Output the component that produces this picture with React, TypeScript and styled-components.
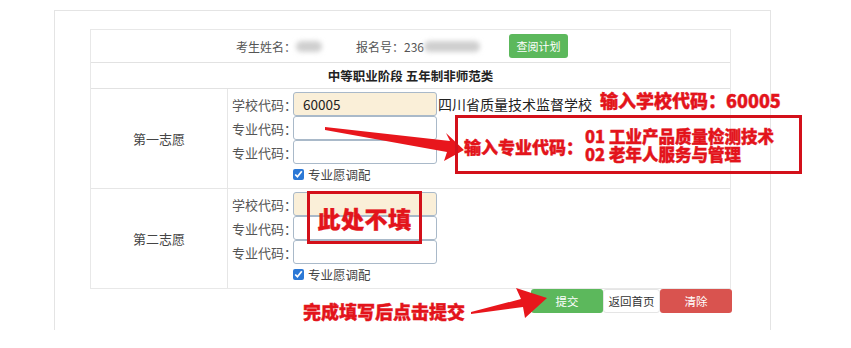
import styled, { createGlobalStyle } from "styled-components";

const GlobalStyle = createGlobalStyle`
  body {
    margin: 0;
    background: #ffffff;
    font-family: "Noto Sans CJK SC", "Noto Sans", sans-serif;
    color: #333;
  }
`;

const fields = ["学校代码：", "专业代码：", "专业代码："];

interface ChoiceProps {
  title: string;
  schoolCode?: string;
  schoolName?: string;
}

function Choice({ title, schoolCode, schoolName }: ChoiceProps) {
  return (
    <ChoiceRow>
      <ChoiceLabel>{title}</ChoiceLabel>
      <FieldCell>
        {fields.map((f, i) => (
          <FieldLine key={i}>
            <FieldLabel>{f}</FieldLabel>
            <CodeInput $school={i === 0}>{i === 0 ? schoolCode : ""}</CodeInput>
            {i === 0 && schoolName && <SchoolName>{schoolName}</SchoolName>}
          </FieldLine>
        ))}
        <CheckLine>
          <Check type="checkbox" checked readOnly />
          <span>专业愿调配</span>
        </CheckLine>
      </FieldCell>
    </ChoiceRow>
  );
}

export default function App() {
  return (
    <Page>
      <GlobalStyle />
      <Card>
        <Table>
          <InfoRow>
            <InfoText>考生姓名：</InfoText>
            <Blur $w={26} />
            <InfoText style={{ marginLeft: 34 }}>报名号：236</InfoText>
            <Blur $w={56} />
            <SmallButton $color="#5cb85c">查阅计划</SmallButton>
          </InfoRow>
          <TitleRow>中等职业阶段 五年制非师范类</TitleRow>
          <Choice title="第一志愿" schoolCode="60005" schoolName="四川省质量技术监督学校" />
          <Choice title="第二志愿" />
        </Table>
        <ButtonBar>
          <ActionButton $bg="#5cb85c" $fg="#fff">提交</ActionButton>
          <ActionButton $bg="#fff" $fg="#333" $w={57}>返回首页</ActionButton>
          <ActionButton $bg="#d9534f" $fg="#fff">清除</ActionButton>
        </ButtonBar>
      </Card>

      <Arrows viewBox="0 0 851 348" width={851} height={348}>
        <polygon points="325,127 450,141 446,133 464,150 444,161 447,152 325,130" fill="#e8161c" />
        <polygon points="471,312 521,299 516,288 547,298 525,318 523,307 471,314" fill="#e8161c" />
      </Arrows>

      <Note $x={600} $y={89} $size={18}>输入学校代码：60005</Note>
      <NoteBox $x={455} $y={115} $w={347} $h={59}>
        <NoteLead>输入专业代码：</NoteLead>
        <NoteList>
          <span>01 工业产品质量检测技术</span>
          <span>02 老年人服务与管理</span>
        </NoteList>
      </NoteBox>
      <NoteBox $x={307} $y={191} $w={115} $h={53} $center>
        <BigNote>此处不填</BigNote>
      </NoteBox>
      <Note $x={303} $y={300} $size={18}>完成填写后点击提交</Note>
    </Page>
  );
}

const Page = styled.div`
  position: relative;
  width: 851px;
  height: 348px;
  overflow: hidden;
  padding: 10px 0 0 54px;
  box-sizing: border-box;
`;

const Card = styled.div`
  width: 717px;
  height: 320px;
  box-sizing: border-box;
  border: 1px solid #e4e4e4;
  border-bottom: none;
  padding: 18px 0 0 35px;
`;

const Table = styled.div`
  width: 641px;
  box-sizing: border-box;
  border: 1px solid #e8e8e8;
  display: flex;
  flex-direction: column;
`;

const InfoRow = styled.div`
  height: 32px;
  border-bottom: 1px solid #e2e2e2;
  display: flex;
  align-items: center;
  padding-left: 145px;
  font-size: 12px;
  color: #555;
`;

const InfoText = styled.span`
  white-space: nowrap;
`;

const Blur = styled.span<{ $w: number }>`
  display: inline-block;
  width: ${(p) => p.$w}px;
  height: 11px;
  background: #cfcfcf;
  border-radius: 6px;
  filter: blur(2.5px);
`;

const SmallButton = styled.span<{ $color: string }>`
  margin-left: 29px;
  width: 59px;
  height: 24px;
  border-radius: 3px;
  background: ${(p) => p.$color};
  color: #fff;
  font-size: 11px;
  display: flex;
  align-items: center;
  justify-content: center;
`;

const TitleRow = styled.div`
  height: 25px;
  border-bottom: 1px solid #e2e2e2;
  display: flex;
  align-items: center;
  justify-content: center;
  font-size: 12.5px;
  font-weight: 700;
  color: #222;
`;

const ChoiceRow = styled.div`
  display: grid;
  grid-template-columns: 137px 1fr;
  height: 99px;
  border-bottom: 1px solid #e6e6e6;
  &:last-child {
    border-bottom: none;
  }
`;

const ChoiceLabel = styled.div`
  border-right: 1px solid #e6e6e6;
  display: flex;
  align-items: center;
  justify-content: center;
  font-size: 13px;
  color: #444;
`;

const FieldCell = styled.div`
  padding: 3px 0 0 4px;
  display: flex;
  flex-direction: column;
`;

const FieldLine = styled.div`
  display: flex;
  align-items: center;
  height: 24px;
`;

const FieldLabel = styled.span`
  width: 61px;
  font-size: 13px;
  color: #555;
  white-space: nowrap;
`;

const CodeInput = styled.div<{ $school: boolean }>`
  width: 144px;
  height: 24px;
  box-sizing: border-box;
  border: 1px solid #a9b9c9;
  border-radius: 3px;
  background: ${(p) => (p.$school ? "#faefd8" : "#fff")};
  padding-left: 9px;
  font-size: 13.5px;
  color: #222;
  display: flex;
  align-items: center;
`;

const SchoolName = styled.span`
  margin-left: 1px;
  font-size: 14px;
  color: #222;
  white-space: nowrap;
`;

const CheckLine = styled.label`
  display: flex;
  align-items: center;
  gap: 4px;
  height: 20px;
  padding-left: 61px;
  font-size: 12.5px;
  color: #444;
`;

const Check = styled.input`
  margin: 0;
  width: 11px;
  height: 11px;
  accent-color: #2b78d6;
`;

const ButtonBar = styled.div`
  width: 642px;
  display: flex;
  justify-content: flex-end;
`;

const ActionButton = styled.span<{ $bg: string; $fg: string; $w?: number }>`
  width: ${(p) => p.$w ?? 72}px;
  height: 24px;
  border-radius: 3px;
  background: ${(p) => p.$bg};
  color: ${(p) => p.$fg};
  border: ${(p) => (p.$bg === "#fff" ? "1px solid #e5e5e5" : "none")};
  box-sizing: border-box;
  font-size: 11.5px;
  display: flex;
  align-items: center;
  justify-content: center;
`;

const Arrows = styled.svg`
  position: absolute;
  left: 0;
  top: 0;
  pointer-events: none;
`;

const Note = styled.div<{ $x: number; $y: number; $size: number }>`
  position: absolute;
  left: ${(p) => p.$x}px;
  top: ${(p) => p.$y}px;
  font-size: ${(p) => p.$size}px;
  line-height: 22px;
  font-weight: 900;
  -webkit-text-stroke: 0.4px #e3141b;
  color: #e3141b;
  white-space: nowrap;
`;

const NoteBox = styled.div<{ $x: number; $y: number; $w: number; $h: number; $center?: boolean }>`
  position: absolute;
  left: ${(p) => p.$x}px;
  top: ${(p) => p.$y}px;
  width: ${(p) => p.$w}px;
  height: ${(p) => p.$h}px;
  box-sizing: border-box;
  border: 3px solid #d3101a;
  display: flex;
  align-items: center;
  justify-content: ${(p) => (p.$center ? "center" : "flex-start")};
  padding-left: ${(p) => (p.$center ? 0 : 6)}px;
  color: #e3141b;
  font-weight: 900;
  -webkit-text-stroke: 0.4px #e3141b;
  white-space: nowrap;
`;

const NoteLead = styled.span`
  font-size: 17px;
  line-height: 20px;
  padding-top: 4px;
`;

const NoteList = styled.div`
  display: flex;
  flex-direction: column;
  font-size: 16.5px;
  line-height: 18px;
  margin-left: 2px;
`;

const BigNote = styled.span`
  font-size: 23px;
  letter-spacing: 0.5px;
`;
